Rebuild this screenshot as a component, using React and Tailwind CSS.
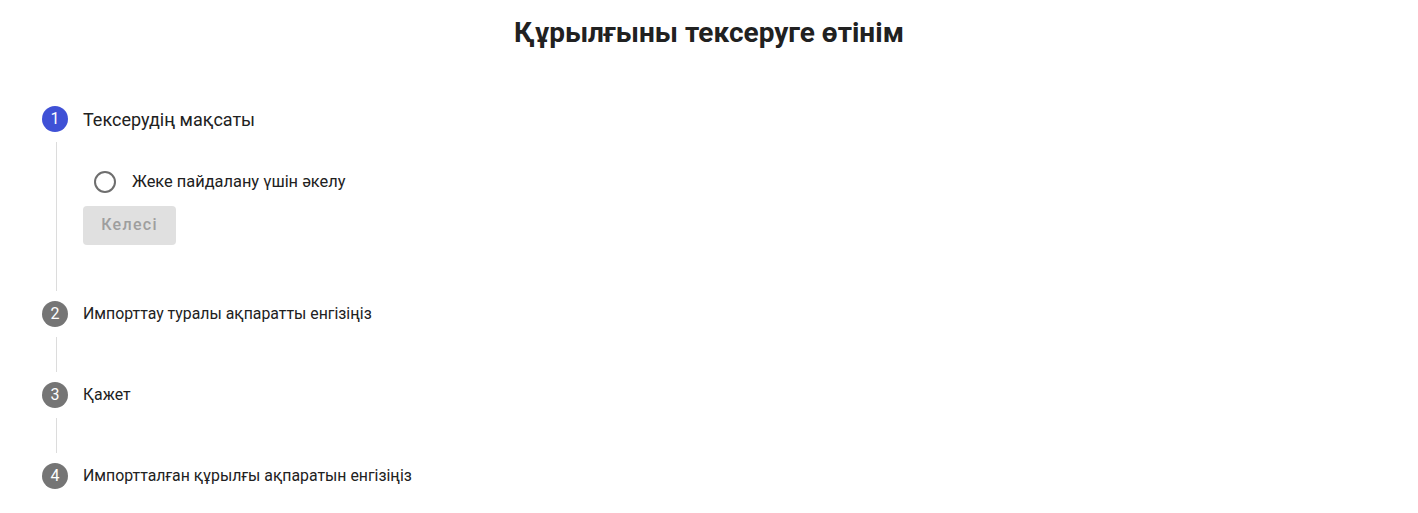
import React from 'react'

const STEPS = [
  { n: 1, label: 'Тексерудің мақсаты', active: true },
  { n: 2, label: 'Импорттау туралы ақпаратты енгізіңіз' },
  { n: 3, label: 'Қажет' },
  { n: 4, label: 'Импортталған құрылғы ақпаратын енгізіңіз' },
]

function StepIcon({ n, active }) {
  return (
    <div
      className={`w-[26px] h-[26px] rounded-full flex items-center justify-center text-white text-[16px] leading-none ${
        active ? 'bg-[#3f51d6]' : 'bg-[#757575]'
      }`}
    >
      {n}
    </div>
  )
}

export default function App() {
  return (
    <div className="min-h-screen bg-white text-[#212121]" style={{ fontFamily: 'Roboto, "Liberation Sans", sans-serif' }}>
      <h1 className="text-center text-[28px] font-bold pt-[16px] leading-[34px] text-[#212121]">
        Құрылғыны тексеруге өтінім
      </h1>

      <div className="pl-[42px] pt-[56px]">
        {STEPS.map((s, i) => (
          <div key={s.n}>
            <div className="flex items-center h-[26px]">
              <StepIcon n={s.n} active={s.active} />
              <span className={`ml-[15px] ${s.active ? 'text-[18px]' : 'text-[15.85px]'} text-[#212121]`}>
                {s.label}
              </span>
            </div>
            {i < STEPS.length - 1 && (
              <div className="ml-[14px] py-[10px]">
                <div className="border-l border-[#dcdcdc] pl-[26px]">
                  {s.active ? (
                    <div className="h-[149px] pt-[28px]">
                      <label className="flex items-center gap-[16px] ml-[11px]">
                        <span className="w-[22px] h-[22px] rounded-full border-2 border-[#6e6e6e]" />
                        <span className="text-[16.4px]">Жеке пайдалану үшін әкелу</span>
                      </label>
                      <button
                        disabled
                        className="mt-[11px] w-[93px] h-[39px] rounded bg-[#e0e0e0] text-[#9e9e9e] text-[16px] font-medium tracking-[0.08em]"
                      >
                        Келесі
                      </button>
                    </div>
                  ) : (
                    <div className="h-[35px]" />
                  )}
                </div>
              </div>
            )}
          </div>
        ))}
      </div>
    </div>
  )
}
